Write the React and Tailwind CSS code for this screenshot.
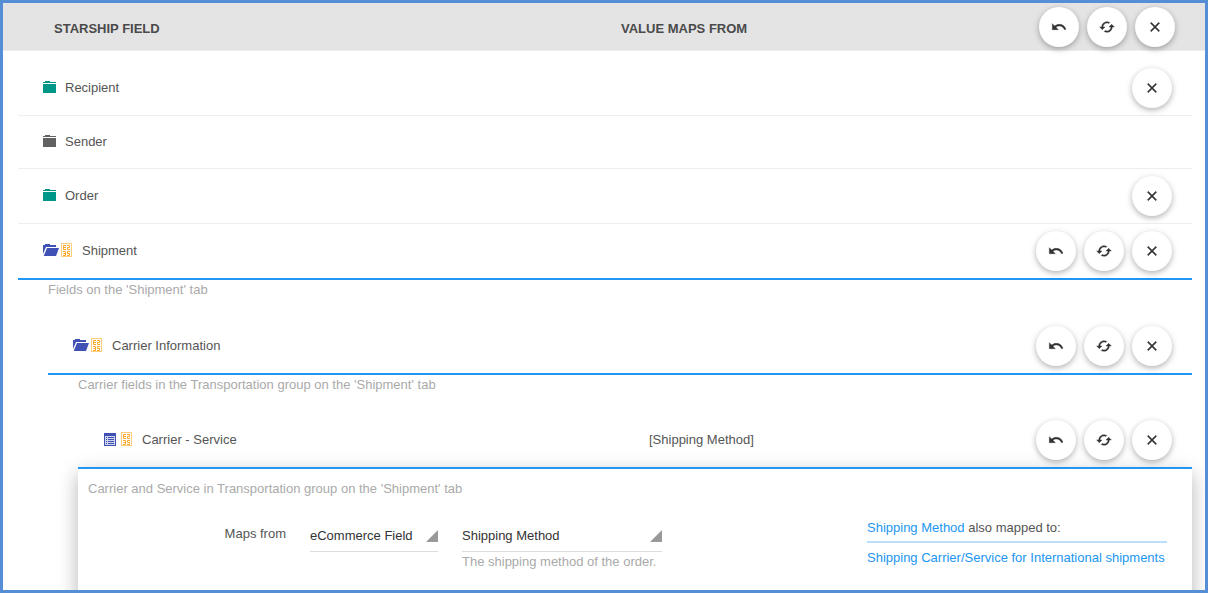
import React from "react";

function FolderIcon({ className }) {
  return (
    <svg width="13" height="12" viewBox="0 0 13 12" fill="currentColor" shapeRendering="crispEdges" aria-hidden="true" className={className}>
      <path d="M2 0h5v1h6v1H0V1h2zM0 3h13v9H0z" />
    </svg>
  );
}

function OpenFolderIcon() {
  return (
    <svg width="16" height="12" viewBox="0 0 16 12" fill="currentColor" aria-hidden="true" className="text-[#3f51b5]">
      <path d="M0 1h2V0h5v1h6v2H3L0 10z" />
      <path d="M4 4h12l-3 8H0.700z" />
    </svg>
  );
}

function ListIcon() {
  return (
    <svg width="16" height="13" viewBox="0 0 16 13" fill="#3f51b5" shapeRendering="crispEdges" aria-hidden="true">
      <path fillRule="evenodd" d="M1 0h12v13H1zM2 3v9h10V3z" />
      <path d="M3 4h1v1H3zM5 4h6v1H5zM3 6h1v1H3zM5 6h6v1H5zM3 8h1v1H3zM5 8h6v1H5zM3 10h1v1H3zM5 10h6v1H5z" />
      <path fillOpacity=".25" d="M2 3h10v9H2z" />
    </svg>
  );
}

function MappedIcon() {
  return (
    <svg width="12" height="14" viewBox="0 0 12 14" fill="none" aria-hidden="true">
      <rect x=".5" y=".5" width="10" height="13" stroke="#ffcc80" />
      <g stroke="#ffa726">
        <path d="M5 2.500H2.500V6.500H5M2.500 4.500H5" />
        <path d="M6 2.500H8.500V4.500H6.500V6.500H9" />
        <path d="M2 8.500H4.500V12.500H2M2.500 10.500H4.500" />
        <path d="M9 8.500H6.500V10.500H8.500V12.500H6" />
      </g>
    </svg>
  );
}

const ACTIONS = {
  undo: {
    label: "Undo",
    path: "M12.500 8c-2.650 0-5.050.990-6.900 2.600L2 7v9h9l-3.620-3.620c1.390-1.160 3.160-1.880 5.120-1.880 3.540 0 6.550 2.310 7.600 5.500l2.370-.780C21.080 11.030 17.150 8 12.500 8z",
  },
  reset: {
    label: "Reset",
    path: "M19 8l-4 4h3c0 3.310-2.690 6-6 6-1.010 0-1.970-.250-2.800-.700l-1.460 1.460C8.970 19.540 10.430 20 12 20c4.420 0 8-3.580 8-8h3l-4-4zM6 12c0-3.310 2.690-6 6-6 1.010 0 1.970.250 2.800.700l1.460-1.460C15.030 4.460 13.570 4 12 4c-4.420 0-8 3.580-8 8H1l4 4 4-4H6z",
  },
  clear: {
    label: "Clear",
    path: "M19 6.410L17.590 5 12 10.590 6.410 5 5 6.410 10.590 12 5 17.590 6.410 19 12 13.410 17.590 19 19 17.590 13.410 12z",
  },
};

function Actions({ names }) {
  return (
    <div className="relative z-10 flex gap-2">
      {names.map((name) => (
        <button
          key={name}
          type="button"
          aria-label={ACTIONS[name].label}
          className="flex size-10 items-center justify-center rounded-full bg-white text-[#333] shadow-[0_2px_5px_rgba(0,0,0,0.2),0_2px_8px_rgba(0,0,0,0.12)]"
        >
          <svg width="16" height="16" viewBox="0 0 24 24" fill="currentColor" stroke="currentColor" strokeWidth=".6" aria-hidden="true">
            <path d={ACTIONS[name].path} />
          </svg>
        </button>
      ))}
    </div>
  );
}

const ALL = ["undo", "reset", "clear"];

function Row({ icons, label, value, actions = [], className }) {
  return (
    <div className={`flex items-center pr-5 pl-[25px] ${className}`}>
      <div className="flex flex-1 items-center gap-[9px]">
        <span className="flex items-center gap-0.5 pb-0.5">{icons}</span>
        <span>{label}</span>
      </div>
      <div className="flex w-[523px] items-center justify-between">
        <span>{value}</span>
        <Actions names={actions} />
      </div>
    </div>
  );
}

function Picker({ id, label, options, className }) {
  return (
    <div className={`relative border-b border-[#ddd] ${className}`}>
      <select id={id} aria-label={label} className="block h-[33px] w-full appearance-none bg-transparent pt-[3px] pr-4 text-[#333] outline-none">
        {options.map((o) => (
          <option key={o}>{o}</option>
        ))}
      </select>
      <svg width="12" height="12" viewBox="0 0 12 12" aria-hidden="true" className="pointer-events-none absolute right-0 bottom-[9px]">
        <path d="M12 0v12H0z" fill="#999" />
      </svg>
    </div>
  );
}

export default function App() {
  return (
    <div className="h-screen overflow-hidden border-[3px] border-[#558ed5] bg-white font-['Liberation_Sans',Arial,sans-serif] text-[13px] leading-5 text-[#555]">
      <header className="flex h-12 items-center border-b border-[#eee] bg-[#e4e4e4] pr-[30px] pl-[51px] font-bold text-[#4a4a4a]">
        <h2 className="flex-1 pt-1">STARSHIP FIELD</h2>
        <div className="flex w-[554px] items-center justify-between">
          <h2 className="pt-1">VALUE MAPS FROM</h2>
          <Actions names={ALL} />
        </div>
      </header>

      <main className="pt-[10px] pr-[13px] pl-[15px]">
        <Row className="border-b border-[#eee] py-[7px]" icons={<FolderIcon className="text-[#009688]" />} label="Recipient" actions={["clear"]} />
        <Row className="h-[53px] border-b border-[#eee]" icons={<FolderIcon className="text-[#616161]" />} label="Sender" />
        <Row className="border-b border-[#eee] py-[7px]" icons={<FolderIcon className="text-[#009688]" />} label="Order" actions={["clear"]} />
        <Row className="border-b-2 border-[#2196f3] py-[7px]" icons={<><OpenFolderIcon /><MappedIcon /></>} label="Shipment" actions={ALL} />

        <section className="pl-[30px]">
          <p className="mb-[19px] text-[#aaa]">Fields on the 'Shipment' tab</p>
          <Row className="border-b-2 border-[#2196f3] py-[7px]" icons={<><OpenFolderIcon /><MappedIcon /></>} label="Carrier Information" actions={ALL} />

          <section className="pl-[30px]">
            <p className="mb-[19px] text-[#aaa]">Carrier fields in the Transportation group on the 'Shipment' tab</p>
            <Row className="pt-1.5 pb-[7px]" icons={<><ListIcon /><MappedIcon /></>} label="Carrier - Service" value="[Shipping Method]" actions={ALL} />

            <div className="border-t-2 border-[#2196f3] bg-white px-[10px] pt-[10px] pb-16 shadow-[0_8px_17px_rgba(0,0,0,0.12),0_6px_20px_rgba(0,0,0,0.18)]">
              <p className="text-[#aaa]">Carrier and Service in Transportation group on the 'Shipment' tab</p>
              <div className="flex items-start pt-[19px] pr-[15px]">
                <label htmlFor="source" className="w-[198px] pt-1.5 text-right">Maps from</label>
                <Picker id="source" label="Maps from" options={["eCommerce Field", "Constant Value"]} className="ml-6 w-32" />
                <div className="ml-6 w-[200px]">
                  <Picker id="field" label="Field" options={["Shipping Method", "Order Number"]} />
                  <p className="text-[#aaa]">The shipping method of the order.</p>
                </div>
                <div className="ml-auto w-[300px]">
                  <p className="border-b-2 border-[#bbdefb] pb-[3px]">
                    <a href="#shipping-method" className="text-[#2196f3]">Shipping Method</a> also mapped to:
                  </p>
                  <a href="#international" className="mt-[5px] block text-[#2196f3]">Shipping Carrier/Service for International shipments</a>
                </div>
              </div>
            </div>
          </section>
        </section>
      </main>
    </div>
  );
}
